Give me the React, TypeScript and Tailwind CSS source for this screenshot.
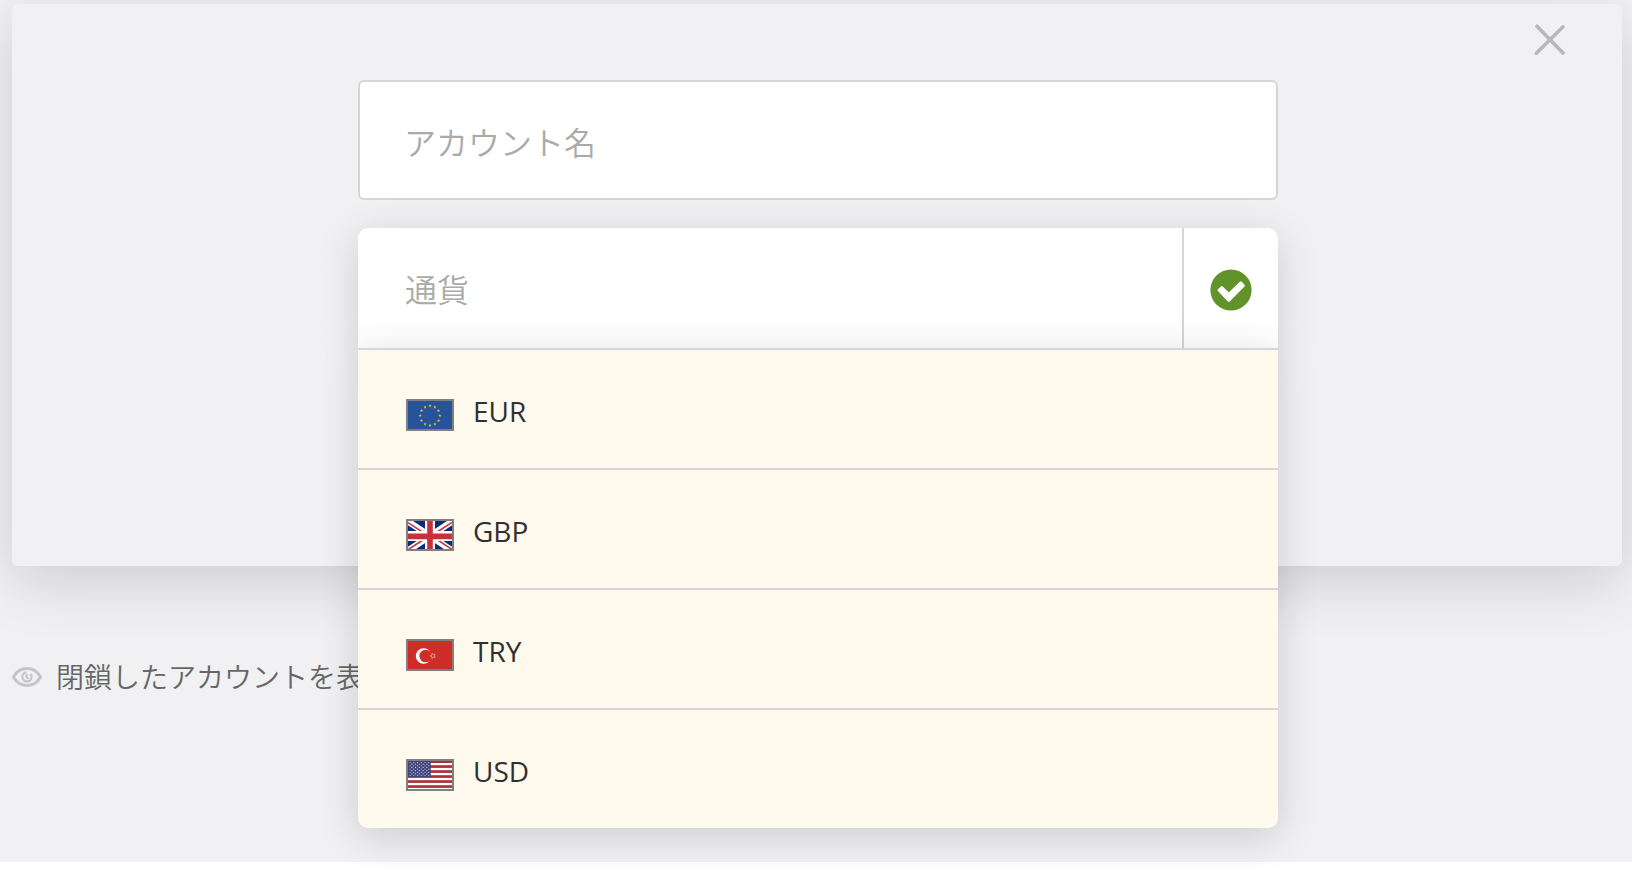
import type { ReactNode } from "react";

const starPoints = (cx: number, cy: number, r: number, start = -Math.PI / 2) =>
  Array.from({ length: 10 }, (_, i) => {
    const radius = i % 2 === 0 ? r : r * 0.45;
    const a = (Math.PI / 5) * i + start;
    return `${(cx + radius * Math.cos(a)).toFixed(2)},${(cy + radius * Math.sin(a)).toFixed(2)}`;
  }).join(" ");

function Flag({ children }: { children: ReactNode }) {
  return (
    <svg viewBox="0 0 44 28" aria-hidden="true" className="h-8 w-12 shrink-0 border-2 border-[#808080]">
      {children}
    </svg>
  );
}

function EuFlag() {
  return (
    <Flag>
      <rect width="44" height="28" fill="#275399" />
      {Array.from({ length: 12 }, (_, i) => {
        const a = (Math.PI / 6) * i;
        return (
          <polygon
            key={i}
            points={starPoints(22 + 9.8 * Math.sin(a), 14.6 - 9.8 * Math.cos(a), 1.7)}
            fill="#d9c52f"
          />
        );
      })}
    </Flag>
  );
}

function UkFlag() {
  return (
    <Flag>
      <rect width="44" height="28" fill="#0e2a7c" />
      <path d="M0 0.5 44 29.5M44 0.5 0 29.5" stroke="#fff" strokeWidth="6.4" />
      <path d="M0 1.6 18 13.4M44 28.4 26 16.6M0 28.6 18 17M44 1.4 26 13" stroke="#c8303c" strokeWidth="1.6" />
      <path d="M22 0V28M0 15H44" stroke="#fff" strokeWidth="10" />
      <path d="M22 0V28M0 15.4H44" stroke="#c8303c" strokeWidth="5.6" />
    </Flag>
  );
}

function TurkishFlag() {
  return (
    <Flag>
      <rect width="44" height="28" fill="#cf2e28" />
      <circle cx="15.6" cy="15" r="7.8" fill="#fff" />
      <circle cx="17.7" cy="15" r="6.3" fill="#cf2e28" />
      <polygon points={starPoints(25, 14.9, 2.8, Math.PI)} fill="#cf2e28" stroke="#e9a19d" strokeWidth="0.8" />
    </Flag>
  );
}

function UsFlag() {
  return (
    <Flag>
      <rect width="44" height="28" fill="#fff" />
      {[-0.7, 4.2, 9.2, 14.2, 19.2, 24.2].map((y) => (
        <rect key={y} y={y} width="44" height="2.7" fill="#ad3037" />
      ))}
      <rect width="22.7" height="16" fill="#41417c" />
      {Array.from({ length: 9 }, (_, row) =>
        Array.from({ length: row % 2 === 0 ? 6 : 5 }, (_, col) => (
          <circle
            key={`${row}-${col}`}
            cx={2 + col * 3.75 + (row % 2 === 0 ? 0 : 1.87)}
            cy={1.6 + row * 1.62}
            r="0.62"
            fill="#d4d4e4"
          />
        )),
      )}
    </Flag>
  );
}

const currencies = [
  { code: "EUR", flag: <EuFlag /> },
  { code: "GBP", flag: <UkFlag /> },
  { code: "TRY", flag: <TurkishFlag /> },
  { code: "USD", flag: <UsFlag /> },
];

function CloseIcon() {
  return (
    <svg viewBox="0 0 32 32" aria-hidden="true" className="size-8">
      <path d="M3 2.2 29 29M29 2.8 2.4 29.2" fill="none" stroke="#b8b8b8" strokeWidth="3.6" strokeLinecap="round" />
    </svg>
  );
}

function CheckIcon() {
  return (
    <svg viewBox="-21 -21 42 42" aria-hidden="true" className="size-[42px]">
      <circle r="20.6" fill="#62932b" />
      <path
        d="M-12.2 .2 -9.2 -2.6 -2.2 4.3 9.8 -7.3 12.6 -4.4 -2.2 10.6Z"
        fill="#fff"
        stroke="#fff"
        strokeWidth="2.6"
        strokeLinejoin="round"
      />
    </svg>
  );
}

function EyeIcon() {
  return (
    <svg viewBox="0 0 30 20" aria-hidden="true" className="h-5 w-[30px] shrink-0" fill="none" stroke="#c6c6c7">
      <path d="M1.4 10C4.5 4.5 9.3 1.6 15 1.6S25.5 4.5 28.6 10C25.5 15.500 20.700 18.400 15 18.400S4.500 15.500 1.400 10Z" strokeWidth="3" />
      <path d="M19 7.600A4.600 4.600 0 1 1 13.400 5.500M14.800 7.600A2.200 2.200 0 0 0 15.800 11" strokeWidth="2.200" strokeLinecap="round" />
    </svg>
  );
}

export default function App() {
  return (
    <div className="min-h-screen bg-white font-['Open_Sans','Noto_Sans_CJK_JP',sans-serif]">
      <main className="bg-[#f1f1f3] pt-1 pr-2.5 pl-3">
        <section className="rounded-md bg-[#f1f1f3] pb-[218px] shadow-[0_16px_60px_rgba(0,0,0,0.15)]">
          <div className="flex h-[76px] items-start justify-end pt-5 pr-14">
            <button type="button" aria-label="閉じる">
              <CloseIcon />
            </button>
          </div>
          <form className="relative z-10 mx-auto flex max-w-[922px] flex-col gap-7 pl-0.5">
            <input
              type="text"
              aria-label="アカウント名"
              placeholder="アカウント名"
              className="h-30 w-full rounded-md border-2 border-[#d6d6d6] bg-white px-11 pt-1 text-[32px] font-[350] text-[#303030] outline-none placeholder:text-[#aaaaaa]"
            />
            <div className="relative">
              <div className="flex h-30 rounded-t-[10px] bg-white shadow-[0_8px_40px_rgba(0,0,0,0.15)]">
                <input
                  type="text"
                  role="combobox"
                  aria-label="通貨"
                  aria-expanded="true"
                  aria-controls="currency-list"
                  placeholder="通貨"
                  className="min-w-0 flex-1 px-[47px] pt-1 text-[32px] font-[350] text-[#303030] outline-none placeholder:text-[#aaaaaa]"
                />
                <button
                  type="button"
                  aria-label="選択"
                  className="flex w-24 items-center justify-center border-l-2 border-[#d6d6d6] pt-1"
                >
                  <CheckIcon />
                </button>
              </div>
              <ul
                id="currency-list"
                role="listbox"
                aria-label="通貨"
                className="absolute inset-x-0 top-full rounded-b-[10px] bg-[#fffaed] shadow-[0_8px_40px_rgba(0,0,0,0.16)]"
              >
                {currencies.map(({ code, flag }) => (
                  <li
                    key={code}
                    role="option"
                    aria-selected="false"
                    className="flex h-30 items-center gap-[19px] border-t-2 border-[#d6d6d6] px-12 text-[28px] text-[#303030]"
                  >
                    <span className="pt-3">{flag}</span>
                    <span className="pt-1">{code}</span>
                  </li>
                ))}
              </ul>
            </div>
          </form>
        </section>
        <div className="flex h-[296px] items-start pt-[90px]">
          <button type="button" className="flex items-center gap-3.5 text-[28px] font-[350] text-[#666666]">
            <EyeIcon />
            <span>閉鎖したアカウントを表示</span>
          </button>
        </div>
      </main>
    </div>
  );
}
